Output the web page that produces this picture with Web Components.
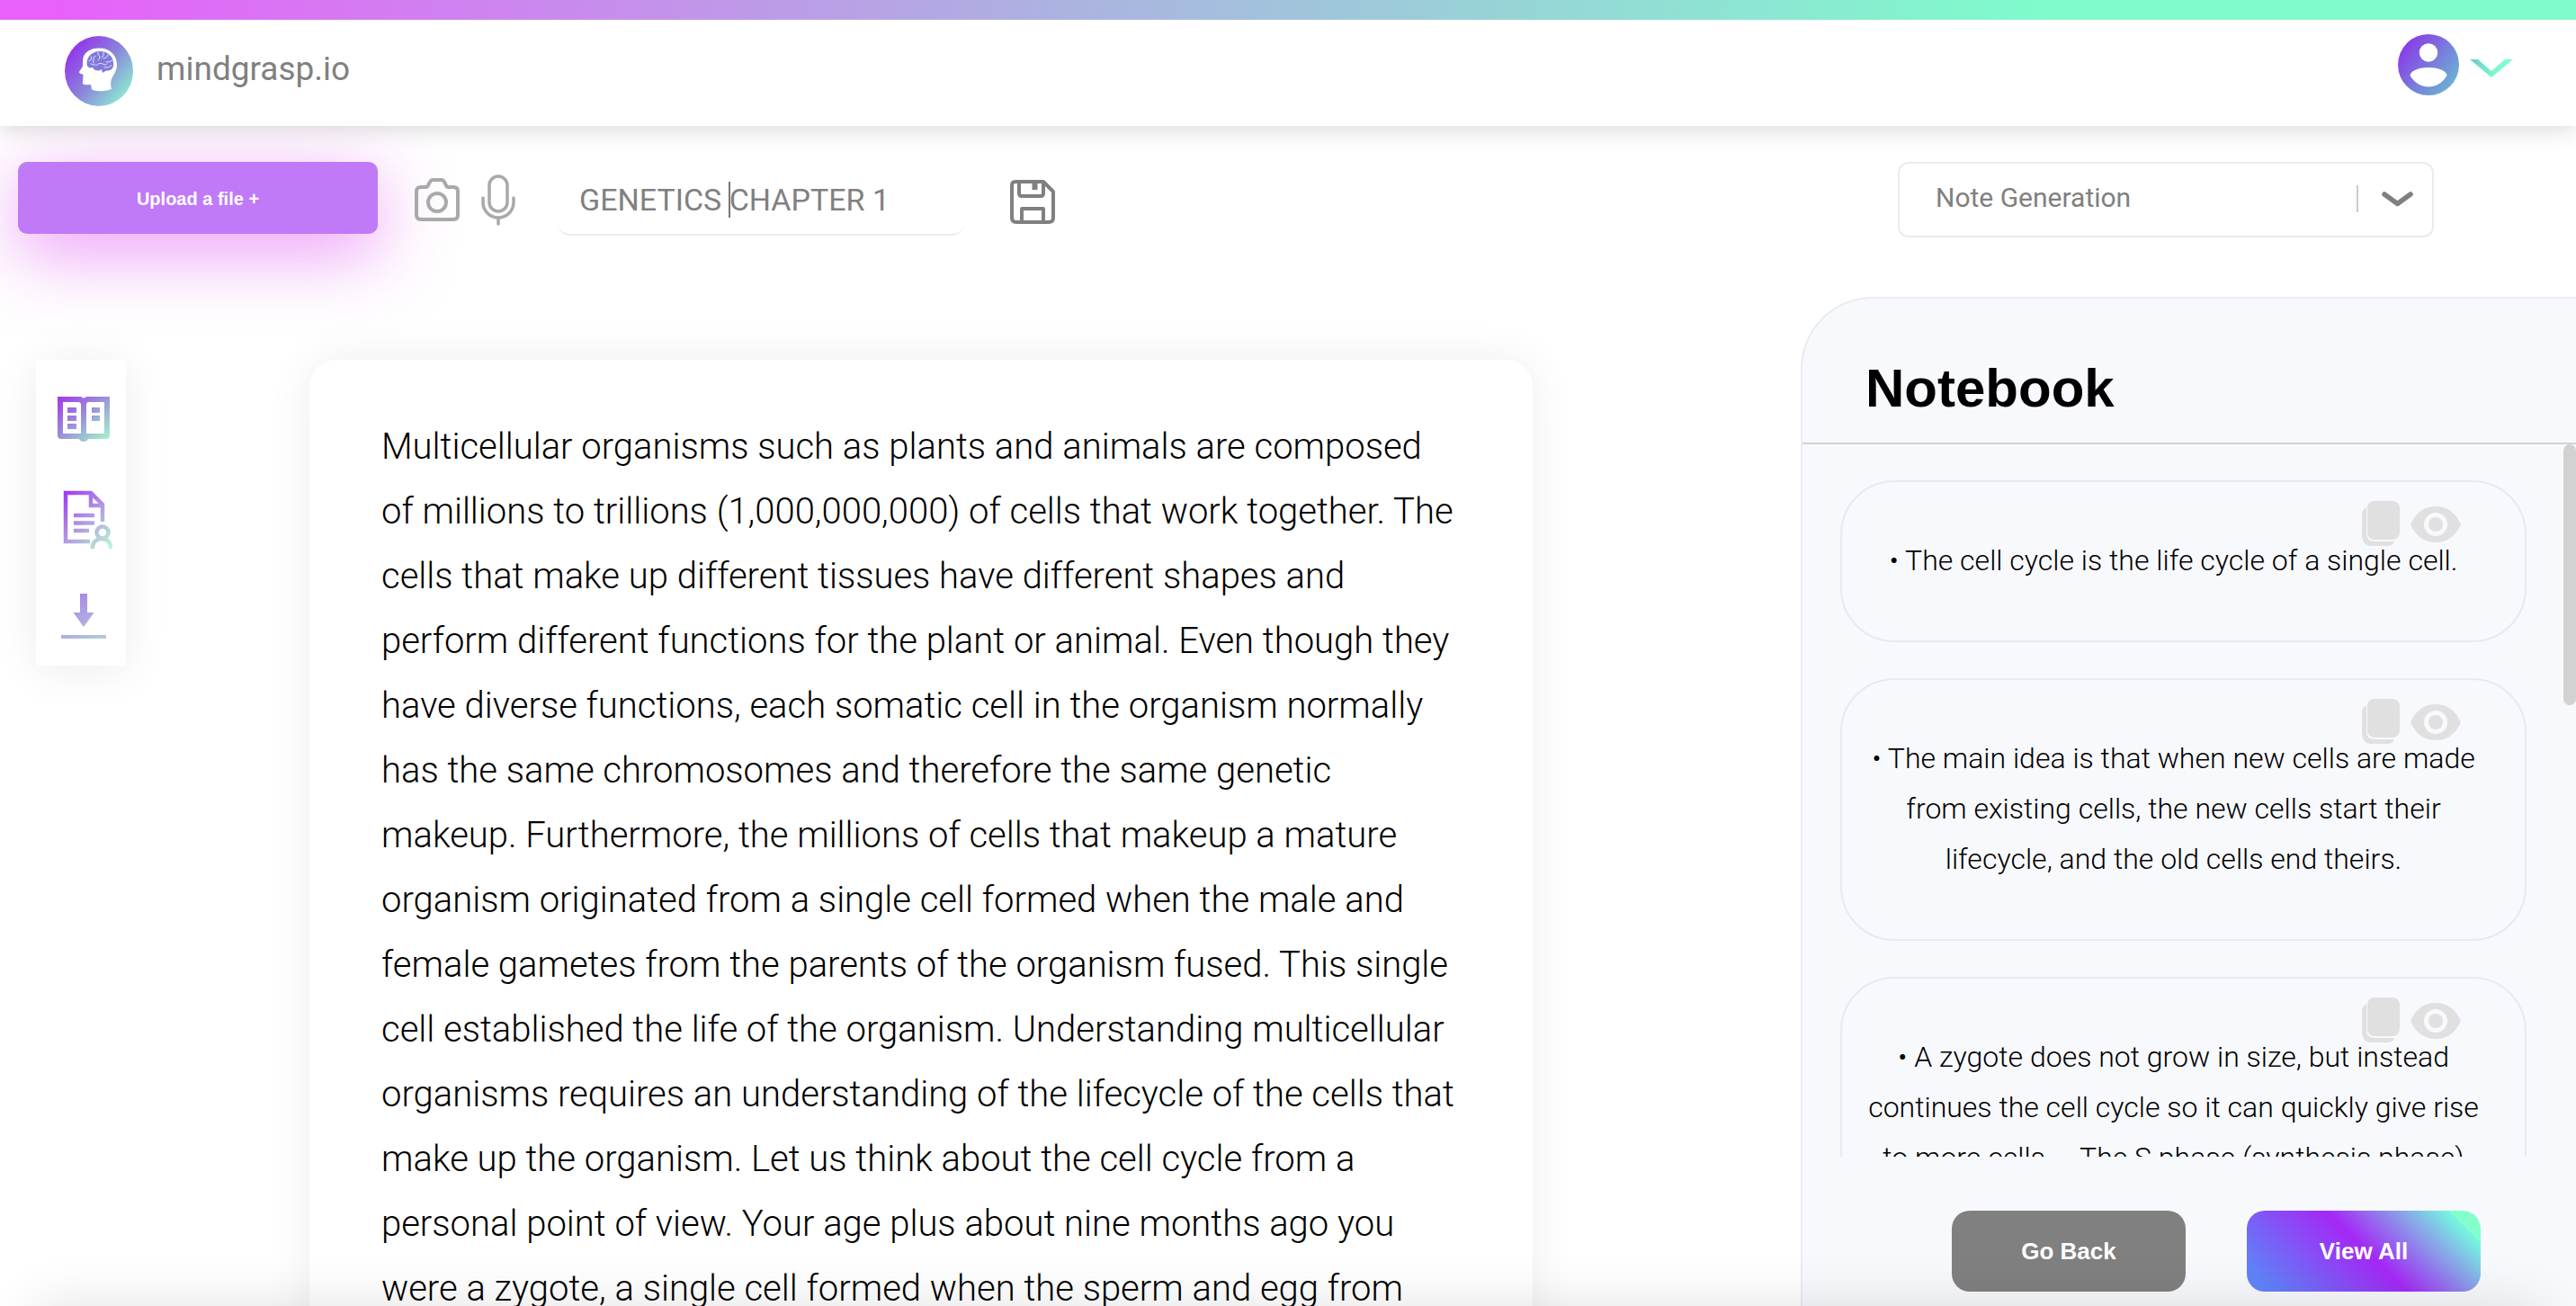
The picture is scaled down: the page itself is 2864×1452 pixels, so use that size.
<!DOCTYPE html>
<html lang="en">
<head>
<meta charset="utf-8">
<title>mindgrasp.io</title>
<style>
  html, body { margin: 0; height: 100%; }
  body { font-family: Roboto, "Liberation Sans", sans-serif; color: #000; background: #fff; }
</style>
</head>
<body>
<mg-app></mg-app>
<script>
const define = (name, html) => {
  const template = document.createElement('template');
  template.innerHTML = html;
  customElements.define(name, class extends HTMLElement {
    constructor() {
      super();
      this.attachShadow({ mode: 'open' }).append(template.content.cloneNode(true));
    }
  });
};

define('mg-logo', `
<style>
  :host { display: block; padding-bottom: 4px; }
  a { display: flex; align-items: center; gap: 26px; color: #808080; text-decoration: none; font-size: 37px; line-height: 48px; }
  svg { display: block; width: 76px; height: 78px; }
  span { padding-bottom: 4px; }
</style>
<a href="#">
  <svg viewBox="0 0 76 78" aria-hidden="true">
    <defs><linearGradient id="g" x1=".1" y1=".15" x2=".9" y2=".85"><stop offset="0" stop-color="#9333ea"/><stop offset=".5" stop-color="#8a83dc"/><stop offset="1" stop-color="#8cead0"/></linearGradient></defs>
    <ellipse cx="38" cy="39" rx="38" ry="39" fill="url(#g)"/>
    <path fill="#fff" d="M20 28C20 18 29 13.500 38 13.500C50 13.500 58 21 58 32C58 38 55 42 53 46C50.500 50 51 55 52 59C45 62 35 62 30 59.500L29 54C25 54 21 55 20 53L20.500 43C19 42 16.500 42 16 40.500C16 39 19 36 20 33.500Z"/>
    <path fill="#8079dc" d="M25 33C23 25 29 17 39 17C48 17 54 23 54 30C55 35 52 38 48 38.500C45 38 44 40 42 41L41 37C37 40 32 38 31 35C28 36 26 35 25 33Z"/>
    <path fill="none" stroke="#fff" stroke-width=".8" stroke-linecap="round" d="M27 28q3-1 3-5M32 30q-1-5 2-8M37 18q-1 3 2 5q0 3-2 4M43 18q1 4-2 6M43 25q5-1 5-4M46 29q4 1 7-2M35 33q3-4 7-2t5 0M29 31q3 2 5 1M44 35q4 1 8-2"/>
  </svg>
  <span>mindgrasp.io</span>
</a>`);

define('mg-account', `
<style>
  :host { display: block; }
  button { display: flex; align-items: center; gap: 11px; border: 0; padding: 0; background: none; }
  svg { display: block; }
  svg + svg { margin-top: 8px; }
</style>
<button type="button" aria-label="Account menu">
  <svg width="68" height="68" viewBox="0 0 68 68">
    <defs><linearGradient id="a" x1="0" y1=".1" x2="1" y2=".9"><stop offset=".05" stop-color="#8b35e8"/><stop offset="1" stop-color="#68c0d0"/></linearGradient></defs>
    <circle cx="34" cy="34" r="34" fill="url(#a)"/>
    <circle cx="34" cy="20.500" r="10.200" fill="#fff"/>
    <path fill="#fff" d="M13.500 46C14 40 25 37 34 37S54 40 54.500 46C50 54 42 58.500 34 58.500S18 54 13.500 46Z"/>
  </svg>
  <svg width="50" height="22" viewBox="0 0 50 22">
    <defs><linearGradient id="c"><stop offset="0" stop-color="#68c8cc"/><stop offset=".55" stop-color="#7bf9c9"/><stop offset="1" stop-color="#7fffd0"/></linearGradient></defs>
    <path d="M1 1H10L25 14L40 1H49L25 21Z" fill="url(#c)"/>
  </svg>
</button>`);

define('mg-header', `
<style>
  :host { display: block; position: relative; background: #fff; box-shadow: 0 4px 24px rgba(0,0,0,.15); }
  .bar { height: 22px; background: linear-gradient(90deg, #e761fa, #e761fa 2%, #acb2e0 41%, #7ffbcc 79%); }
  .row { display: flex; justify-content: space-between; align-items: center; box-sizing: border-box; height: 118px; padding: 0 69px 0 72px; }
  mg-account { padding-bottom: 18px; }
</style>
<div class="bar"></div>
<div class="row"><mg-logo></mg-logo><mg-account></mg-account></div>`);

define('mg-toolbar', `
<style>
  :host { display: flex; align-items: flex-start; padding: 40px 158px 0 20px; }
  .upload { width: 400px; height: 80px; border: 0; border-radius: 10px; padding: 2px 0 0; background: #c07af8; color: #fff; font: bold 20px/24px "Liberation Sans", sans-serif; box-shadow: 0 20px 80px rgba(217,50,240,.5); }
  .icon { display: block; border: 0; padding: 0; background: none; height: 84px; }
  .icon svg { display: block; margin: auto; }
  .camera { margin-left: 39px; }
  .mic { margin-left: 20px; }
  .save { margin-left: 50px; height: 88px; }
  .field { position: relative; margin-left: 45px; }
  .title { display: block; box-sizing: border-box; width: 452px; height: 82px; margin: 0; padding: 4px 24px 0; border: 0 solid #e8edf2; border-bottom-width: 2px; border-radius: 14px; outline: 0; background: transparent; color: #808080; font: 400 34px/42px Roboto, sans-serif; }
  .caret { position: absolute; left: 190px; top: 22px; width: 2px; height: 40px; background: #777; }
  .mode { position: relative; margin-left: auto; }
  select { appearance: none; display: block; box-sizing: border-box; width: 596px; height: 84px; margin: 0; padding: 0 100px 4px 40px; border: 2px solid #e8ecf3; border-radius: 12px; background: #fff; color: #808080; font: 400 30px/40px Roboto, sans-serif; }
  .arrow { position: absolute; right: 20px; top: 24px; pointer-events: none; }
</style>
<button class="upload" type="button">Upload a file +</button>
<button class="icon camera" type="button" aria-label="Camera">
  <svg width="54" height="54" viewBox="0 0 54 54" fill="none" stroke="#a9a9a9" stroke-width="4" stroke-linejoin="round"><path d="M9 13H14.500Q16.500 13 17.500 10L19.500 6.500Q20.500 5 22.500 5H31.500Q33.500 5 34.500 6.500L36.500 10Q37.500 13 39.500 13H45Q50 13 50 18V44Q50 49 45 49H9Q4 49 4 44V18Q4 13 9 13Z"/><circle cx="27" cy="30" r="10"/></svg>
</button>
<button class="icon mic" type="button" aria-label="Microphone">
  <svg width="42" height="62" viewBox="0 0 42 62" fill="none" stroke="#a9a9a9" stroke-width="3.500" stroke-linecap="round"><rect x="11" y="5" width="20" height="39" rx="10"/><path d="M4 29V34A17 17 0 0 0 38 34V29M21 51V58"/></svg>
</button>
<div class="field"><input class="title" type="text" aria-label="Document title" value="GENETICS CHAPTER 1"><span class="caret"></span></div>
<button class="icon save" type="button" aria-label="Save">
  <svg width="52" height="52" viewBox="0 0 52 52" fill="none" stroke="#808080" stroke-width="4" stroke-linejoin="round"><path d="M7 4H38L49 15V44Q49 49 44 49H8Q3 49 3 44V8Q3 4 7 4Z"/><path d="M11 5V17Q11 20 14 20H35Q38 20 38 17V5M14 49V34H38V49"/><path d="M28.500 4V13" stroke-width="6"/></svg>
</button>
<div class="mode">
  <select aria-label="Mode"><option>Note Generation</option></select>
  <svg class="arrow" width="68" height="36" viewBox="0 0 68 36" fill="none"><path d="M3 2V32" stroke="#ccc" stroke-width="2"/><path d="M33 12L47.500 22.500L62 12" stroke="#808080" stroke-width="5.500" stroke-linecap="round" stroke-linejoin="round"/></svg>
</div>`);

define('mg-tools', `
<style>
  :host { display: flex; flex-direction: column; justify-content: space-between; align-items: center; box-sizing: border-box; width: 100px; height: 340px; padding: 34px 0 24px; background: #fff; border-radius: 4px; box-shadow: 0 4px 50px rgba(0,0,0,.08); }
  button { display: block; border: 0; padding: 0 0 0 6px; background: none; }
  svg { display: block; }
</style>
<button type="button" aria-label="Read">
  <svg width="64" height="64" viewBox="0 0 64 64">
    <defs><linearGradient id="b" x1="0" y1="0" x2="1" y2="1"><stop offset=".05" stop-color="#a040e8"/><stop offset=".5" stop-color="#9a98d8"/><stop offset=".95" stop-color="#a4f4c8"/></linearGradient></defs>
    <path fill="url(#b)" fill-rule="evenodd" d="M3 7H29Q32 10 35 7H61V50Q61 54 57 54H37Q36 57 32 57T27 54H7Q3 54 3 50ZM9 13V48H29V16Q29 13 26 13ZM55 13H38Q35 13 35 16V48H55ZM14 19H24V25H14ZM14 28H24V34H14ZM14 37H24V43H14ZM41 19H50V25H41ZM41 28H50V34H41Z"/>
  </svg>
</button>
<button type="button" aria-label="Shared notes">
  <svg width="64" height="70" viewBox="0 0 64 70" fill="none" stroke-width="4.500">
    <defs><linearGradient id="d" gradientUnits="userSpaceOnUse" x1="6" y1="6" x2="66" y2="68"><stop offset="0" stop-color="#a030f5"/><stop offset=".5" stop-color="#b09ce0"/><stop offset="1" stop-color="#bcffd0"/></linearGradient></defs>
    <g stroke="url(#d)"><path d="M39 60H12V6H40L53 19V38M40 6V20H53M21 31H44M21 39.500H44M21 48H38"/><circle cx="53" cy="50" r="6.500"/><path d="M42 68V66A10 9 0 0 1 62 66V68"/></g>
  </svg>
</button>
<button type="button" aria-label="Download">
  <svg width="54" height="60" viewBox="0 0 54 60">
    <defs><linearGradient id="e" gradientUnits="userSpaceOnUse" x1="12" y1="0" x2="50" y2="64"><stop offset="0" stop-color="#a87de8"/><stop offset="1" stop-color="#b4d8da"/></linearGradient></defs>
    <path fill="url(#e)" d="M23 4H31V25H38.500L27 41L15.500 25H23ZM2 50H52V54H2Z"/>
  </svg>
</button>`);

define('mg-document', `
<style>
  :host { display: block; box-sizing: border-box; width: 1360px; padding: 61px 80px; background: #fff; border-radius: 30px; box-shadow: 0 0 50px rgba(0,0,0,.07); font-weight: 300; font-size: 40px; line-height: 72px; }
  p { margin: 0; }
</style>
<p><slot></slot></p>`);

define('mg-note', `
<style>
  :host { display: block; position: relative; box-sizing: border-box; flex: none; padding: 59px 36px 61px 14px; border: 2px solid #e8e9f1; border-radius: 60px; text-align: center; font-size: 32px; line-height: 56px; font-weight: 300; }
  .actions { position: absolute; right: 71px; top: 20px; display: flex; align-items: center; gap: 9px; }
  button { border: 0; padding: 0; background: none; }
  svg { display: block; fill: #e0e0e0; }
  p { position: relative; margin: 0; }
</style>
<div class="actions">
  <button type="button" aria-label="Copy note"><svg width="46" height="54" viewBox="0 0 46 54"><path d="M6 8Q1 11 1 16V38Q1 51 12 51H28Q36 51 37 46H15Q6 46 6 37Z"/><rect x="7" y="1" width="36" height="43" rx="8"/></svg></button>
  <button type="button" aria-label="Show note"><svg width="56" height="44" viewBox="0 0 56 44"><path fill-rule="evenodd" d="M0 22Q9 2 28 2T56 22Q47 42 28 42T0 22ZM28 9A13 13 0 1 0 28 35A13 13 0 1 0 28 9Z"/><circle cx="28" cy="22" r="8"/></svg></button>
</div>
<p><slot></slot></p>`);

define('mg-notebook', `
<style>
  :host { display: flex; flex-direction: column; box-sizing: border-box; width: 862px; border: 2px solid #e8ecf1; border-width: 2px 0 0 2px; border-radius: 80px 0 0 0; background: #f8f9fd; }
  h2 { margin: 0; padding: 80px 70px 40px; border-bottom: 2px solid #d2d2d2; font: bold 60px/40px "Liberation Sans", sans-serif; }
  .area { display: flex; height: 792px; overflow: hidden; }
  .list { flex: 1; display: flex; flex-direction: column; gap: 40px; padding: 40px 41px 0 42px; }
  .thumb { width: 14px; height: 290px; border-radius: 7px; background: #d2d2d2; }
  .buttons { display: flex; justify-content: flex-end; gap: 68px; padding: 60px 106px 16px 0; }
  .buttons button { width: 260px; height: 90px; border: 0; border-radius: 20px; color: #fff; font: bold 26px/32px "Liberation Sans", sans-serif; }
  .back { background: #808080; }
  .all { background: linear-gradient(45deg, #5f83f8 8%, #a428f5 51%, #75f8e0 90%, #84ffcc 90%); }
</style>
<h2>Notebook</h2>
<div class="area"><div class="list"><slot></slot></div><div class="thumb"></div></div>
<div class="buttons"><button class="back" type="button">Go Back</button><button class="all" type="button">View All</button></div>`);

define('mg-app', `
<style>
  :host { display: flex; flex-direction: column; position: relative; height: 100vh; overflow: hidden; }
  mg-header { z-index: 1; flex: none; }
  mg-toolbar { flex: none; height: 184px; box-sizing: border-box; }
  main { flex: 1; display: flex; align-items: flex-start; min-height: 0; }
  mg-tools { margin: 76px 0 0 40px; }
  mg-document { margin: 76px 0 0 204px; }
  mg-notebook { margin: 6px 0 0 auto; }
  .fade { position: absolute; left: 40px; right: 40px; top: 100%; height: 60px; box-shadow: 0 0 60px rgba(0,0,0,.12); }
</style>
<mg-header></mg-header>
<mg-toolbar></mg-toolbar>
<main>
  <mg-tools></mg-tools>
  <mg-document>Multicellular organisms such as plants and animals are composed of millions to trillions (1,000,000,000) of cells that work together. The cells that make up different tissues have different shapes and perform different functions for the plant or animal. Even though they have diverse functions, each somatic cell in the organism normally has the same chromosomes and therefore the same genetic makeup. Furthermore, the millions of cells that makeup a mature organism originated from a single cell formed when the male and female gametes from the parents of the organism fused. This single cell established the life of the organism. Understanding multicellular organisms requires an understanding of the lifecycle of the cells that make up the organism. Let us think about the cell cycle from a personal point of view. Your age plus about nine months ago you were a zygote, a single cell formed when the sperm and egg from</mg-document>
  <mg-notebook>
    <mg-note>• The cell cycle is the life cycle of a single cell.</mg-note>
    <mg-note>• The main idea is that when new cells are made from existing cells, the new cells start their lifecycle, and the old cells end theirs.</mg-note>
    <mg-note>• A zygote does not grow in size, but instead continues the cell cycle so it can quickly give rise to more cells. &nbsp;&nbsp; The S phase (synthesis phase)</mg-note>
  </mg-notebook>
</main>
<div class="fade"></div>`);
</script>
</body>
</html>
